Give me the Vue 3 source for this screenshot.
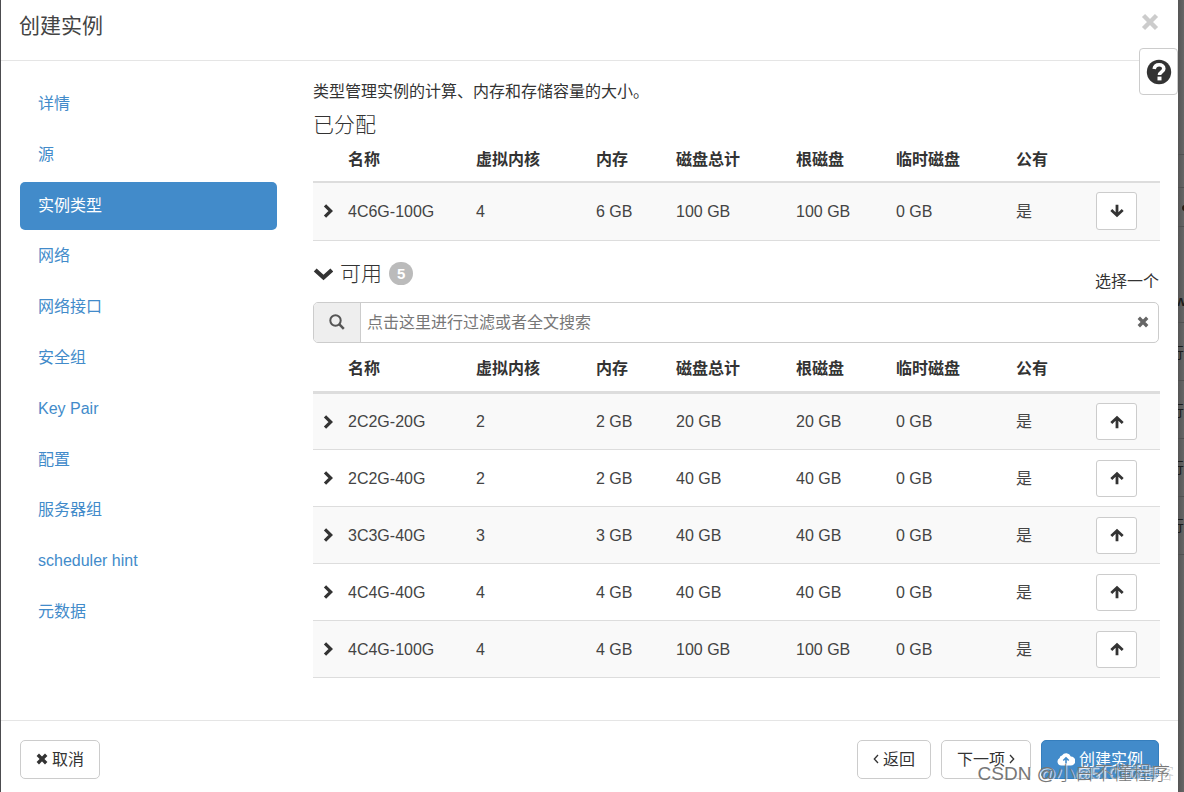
<script setup>
import { ref } from 'vue'

const steps = ['详情', '源', '实例类型', '网络', '网络接口', '安全组', 'Key Pair', '配置', '服务器组', 'scheduler hint', '元数据']
const activeStep = ref('实例类型')
const filter = ref('')
const columns = ['名称', '虚拟内核', '内存', '磁盘总计', '根磁盘', '临时磁盘', '公有']

const tables = [
  {
    key: 'allocated',
    rows: [['4C6G-100G', '4', '6 GB', '100 GB', '100 GB', '0 GB', '是']]
  },
  {
    key: 'available',
    rows: [
      ['2C2G-20G', '2', '2 GB', '20 GB', '20 GB', '0 GB', '是'],
      ['2C2G-40G', '2', '2 GB', '40 GB', '40 GB', '0 GB', '是'],
      ['3C3G-40G', '3', '3 GB', '40 GB', '40 GB', '0 GB', '是'],
      ['4C4G-40G', '4', '4 GB', '40 GB', '40 GB', '0 GB', '是'],
      ['4C4G-100G', '4', '4 GB', '100 GB', '100 GB', '0 GB', '是']
    ]
  }
]

const behind = [
  { top: 154 }, { top: 187 }, { top: 226 }, { top: 322 }, { top: 380 },
  { top: 438 }, { top: 496 }, { top: 554 }
]
const glyphs = [
  { top: 292, text: 'w' },
  { top: 344, text: '行' }, { top: 402, text: '行' }, { top: 459, text: '行' }, { top: 517, text: '行' }
]
</script>

<template>
  <div class="backdrop">
    <div class="page-edge" aria-hidden="true">
      <i v-for="b in behind" :key="b.top" class="rule" :style="{ top: b.top + 'px' }"></i>
      <i class="dot"></i>
      <span v-for="g in glyphs" :key="g.top" class="glyph" :style="{ top: g.top + 'px' }">{{ g.text }}</span>
    </div>
    <section class="dialog" role="dialog" aria-labelledby="title">
      <header class="head">
        <h1 id="title">创建实例</h1>
        <button class="close" type="button" aria-label="关闭">
          <svg width="18" height="18" viewBox="0 0 18 18"><path d="M2.500 2.500l13 13M15.500 2.500l-13 13" stroke="#ccc" stroke-width="4.400" /></svg>
        </button>
      </header>
      <button class="help" type="button" aria-label="帮助">
        <svg width="26" height="26" viewBox="0 0 26 26">
          <circle cx="13" cy="13" r="12.200" fill="#333" />
          <path d="M8.200 10C8.600 7 10.600 5.800 13.200 5.800c2.600 0 4.600 1.500 4.600 3.900 0 3.200-4.300 3.200-4.300 6.300" fill="none" stroke="#fff" stroke-width="3.600" />
          <rect x="11.500" y="17.600" width="4" height="3.800" fill="#fff" />
        </svg>
      </button>

      <div class="body">
        <nav class="steps">
          <a v-for="s in steps" :key="s" href="#" :class="{ active: s === activeStep }" @click.prevent="activeStep = s">{{ s }}</a>
        </nav>

        <main class="panel">
          <p class="intro">类型管理实例的计算、内存和存储容量的大小。</p>
          <template v-for="t in tables" :key="t.key">
            <h2 v-if="t.key === 'allocated'" class="section-title">已分配</h2>
            <template v-else>
              <div class="available-head">
                <h2 class="section-title">
                  <svg width="20" height="14" viewBox="0 0 20 14"><path d="M2.200 3L10.500 10.500 18.800 3" fill="none" stroke="#333" stroke-width="4.200" /></svg>
                  <span>可用</span>
                  <span class="badge">5</span>
                </h2>
                <span class="hint">选择一个</span>
              </div>
              <div class="search">
                <label class="addon" for="filter" aria-label="搜索">
                  <svg width="16" height="16" viewBox="0 0 16 16" fill="none" stroke="#555"><circle cx="6.500" cy="6.500" r="5.200" stroke-width="2" /><path d="M10.200 10.200l4.600 4.600" stroke-width="2.500" /></svg>
                </label>
                <input id="filter" v-model="filter" type="text" placeholder="点击这里进行过滤或者全文搜索" />
                <button class="clear" type="button" aria-label="清除" @click="filter = ''">
                  <svg width="12" height="12" viewBox="0 0 12 12"><path d="M1.800 1.800l8.400 8.400M10.200 1.800l-8.400 8.400" stroke="#666" stroke-width="3.400" /></svg>
                </button>
              </div>
            </template>
            <table :class="t.key">
              <colgroup>
                <col class="c-toggle" /><col class="c-name" /><col class="c-wide" /><col class="c-ram" /><col class="c-wide" />
                <col class="c-root" /><col class="c-wide" /><col class="c-ram" /><col class="c-action" />
              </colgroup>
              <thead>
                <tr><th></th><th v-for="c in columns" :key="c" scope="col">{{ c }}</th><th></th></tr>
              </thead>
              <tbody>
                <tr v-for="r in t.rows" :key="r[0]">
                  <td>
                    <button class="toggle" type="button" :aria-label="'展开 ' + r[0]">
                      <svg width="10" height="14" viewBox="0 0 10 14"><path d="M2 1.300L7.800 7 2 12.700" fill="none" stroke="#333" stroke-width="3.200" /></svg>
                    </button>
                  </td>
                  <td v-for="(v, i) in r" :key="i">{{ v }}</td>
                  <td>
                    <button class="move" type="button" :aria-label="(t.key === 'allocated' ? '移除 ' : '分配 ') + r[0]">
                      <svg width="14" height="14" viewBox="0 0 14 14" fill="none" stroke="#333" stroke-width="2.800">
                        <path v-if="t.key === 'allocated'" d="M7 .8v10.500M1.300 6L7 11.400 12.700 6" />
                        <path v-else d="M7 13.200V2.700M1.300 8L7 2.600 12.700 8" />
                      </svg>
                    </button>
                  </td>
                </tr>
              </tbody>
            </table>
          </template>
        </main>
      </div>

      <footer class="foot">
        <button class="btn" type="button">
          <svg width="12" height="12" viewBox="0 0 12 12"><path d="M1.800 1.800l8.400 8.400M10.200 1.800l-8.400 8.400" stroke="#333" stroke-width="3.400" /></svg>
          取消
        </button>
        <span class="spacer"></span>
        <button class="btn" type="button">
          <svg width="6" height="10" viewBox="0 0 6 10"><path d="M5 1L1.300 5 5 9" fill="none" stroke="#333" stroke-width="1.300" /></svg>
          返回
        </button>
        <button class="btn" type="button">
          下一项
          <svg width="6" height="10" viewBox="0 0 6 10"><path d="M1 1l3.700 4L1 9" fill="none" stroke="#333" stroke-width="1.300" /></svg>
        </button>
        <button class="btn primary" type="button">
          <svg width="18" height="14" viewBox="0 0 18 14">
            <path d="M4.300 13.500A4 4 0 0 1 2.600 6 3 3 0 0 1 5 3.500 5 5 0 0 1 13.800 4.500 4.500 4.500 0 0 1 13.800 13.500z" fill="#fff" />
            <path d="M9 11.500V6.500M6.300 8.500L9 5.800l2.700 2.700" fill="none" stroke="#428bca" stroke-width="1.600" />
          </svg>
          创建实例
        </button>
      </footer>
    </section>
    <span class="mark faint">@51CTO博客</span>
    <span class="mark">CSDN @小白不懂程序</span>
  </div>
</template>

<style>
body { background: #666; }
</style>

<style scoped>
* { box-sizing: border-box; }
.backdrop {
  position: relative;
  min-height: 100vh;
  display: flex;
  padding: 0 6px 0 1px;
  overflow: hidden;
  background: #4c4c4f;
  color: #333;
  font: 16px/23px "Liberation Sans", "Noto Sans CJK SC", sans-serif;
}
button { font: inherit; color: inherit; cursor: pointer; }
svg { display: block; flex: none; }
.page-edge {
  position: absolute;
  inset: 0 0 0 auto;
  width: 6px;
  overflow: hidden;
  background: linear-gradient(90deg, #555, #666);
}
.rule { position: absolute; left: 0; right: 0; height: 1px; background: #505050; }
.dot { position: absolute; top: 205px; left: 4px; width: 6px; height: 6px; border-radius: 3px; background: #2a1c10; }
.glyph { position: absolute; left: -9px; font-size: 15px; line-height: 18px; color: #1c1c1c; }
.glyph:first-of-type { left: -3px; font-weight: 700; }
.dialog { position: relative; flex: 1; display: flex; flex-direction: column; background: #fff; }
.head {
  display: flex;
  justify-content: space-between;
  align-items: flex-start;
  height: 61px;
  padding: 12px 19px 12px 18px;
  border-bottom: 1px solid #e5e5e5;
}
h1, h2 { margin: 0; font-weight: 300; }
h1 { font-size: 21px; line-height: 28px; font-weight: 400; color: #444; }
.close, .toggle, .clear { padding: 0; border: 0; background: none; }
.close { padding-top: 1px; }
.help {
  position: absolute;
  top: 48px;
  right: 0;
  width: 39px;
  height: 47px;
  padding: 0 0 0 6px;
  border: 1px solid #ccc;
  border-radius: 4px;
  background: #fff;
}
.body {
  flex: 1;
  display: grid;
  grid-template-columns: 257px 1fr;
  column-gap: 36px;
  align-items: start;
  padding: 19px 19px 0;
}
.steps { display: flex; flex-direction: column; justify-content: space-between; min-height: 556px; }
.steps a {
  padding: 12px 19px 12px 18px;
  line-height: 24px;
  border-radius: 5px;
  color: #428bca;
  text-decoration: none;
}
.steps a.active { background: #428bca; color: #fff; }
.panel { min-width: 0; }
.intro { margin: 0; line-height: 24px; }
.section-title { display: flex; align-items: center; font-size: 21px; line-height: 28px; }
.intro + .section-title { margin-top: 7px; }
table { width: 100%; table-layout: fixed; border-collapse: collapse; }
.c-toggle { width: 27px; }
.c-name { width: 128px; }
.c-wide { width: 120px; }
.c-ram { width: 80px; }
.c-root { width: 100px; }
.c-action { width: 72px; }
th { height: 43px; padding: 0 8px 1px; text-align: left; font-weight: 700; border-bottom: 2px solid #ddd; white-space: nowrap; }
.available th { height: 50px; padding-top: 4px; border-bottom-width: 3px; }
td { height: 57px; padding: 0 8px; border-bottom: 1px solid #ddd; color: #444; white-space: nowrap; }
.allocated td { height: 58px; }
td:first-child { padding-right: 0; padding-left: 10px; }
tbody tr:nth-child(odd) { background: #f9f9f9; }
.toggle { display: block; }
.move {
  display: grid;
  place-items: center;
  width: 41px;
  height: 38px;
  padding: 0;
  border: 1px solid #ccc;
  border-radius: 3px;
  background: #fff;
}
.available .move { height: 37px; }
.available-head { display: flex; justify-content: space-between; align-items: flex-end; margin-top: 19px; }
.available-head .section-title { align-self: flex-start; gap: 7px; }
.badge {
  padding: 0 8px;
  border-radius: 12px;
  background: #bbb;
  color: #fff;
  font-size: 15px;
  line-height: 23px;
  font-weight: 700;
}
.hint { margin-top: 10px; }
.search { display: flex; height: 41px; margin-top: 9px; border: 1px solid #ccc; border-radius: 5px; overflow: hidden; }
.addon { display: grid; place-items: center; width: 47px; background: #eee; border-right: 1px solid #ccc; }
.search input { flex: 1; min-width: 0; padding: 0 6px; border: 0; outline: 0; font: inherit; color: #555; }
.search input::placeholder { color: #777; opacity: 1; }
.clear { padding: 0 9px; }
.foot { display: flex; align-items: center; gap: 10px; height: 72px; padding: 5px 19px 0; border-top: 1px solid #e5e5e5; }
.spacer { flex: 1; }
.btn {
  display: flex;
  align-items: center;
  gap: 4px;
  height: 39px;
  padding: 0 15px;
  border: 1px solid #ccc;
  border-radius: 5px;
  background: #fff;
}
.btn.primary { border-color: #357ebd; background: #428bca; color: #fff; }
.mark {
  position: absolute;
  right: 14px;
  bottom: 6px;
  font-size: 19px;
  line-height: 24px;
  font-weight: 300;
  color: #777;
  text-shadow: 1px 1px 0 rgba(255, 255, 255, 0.7);
  pointer-events: none;
}
.mark.faint { right: 10px; font-size: 16px; color: rgba(160, 160, 160, 0.6); }
</style>
